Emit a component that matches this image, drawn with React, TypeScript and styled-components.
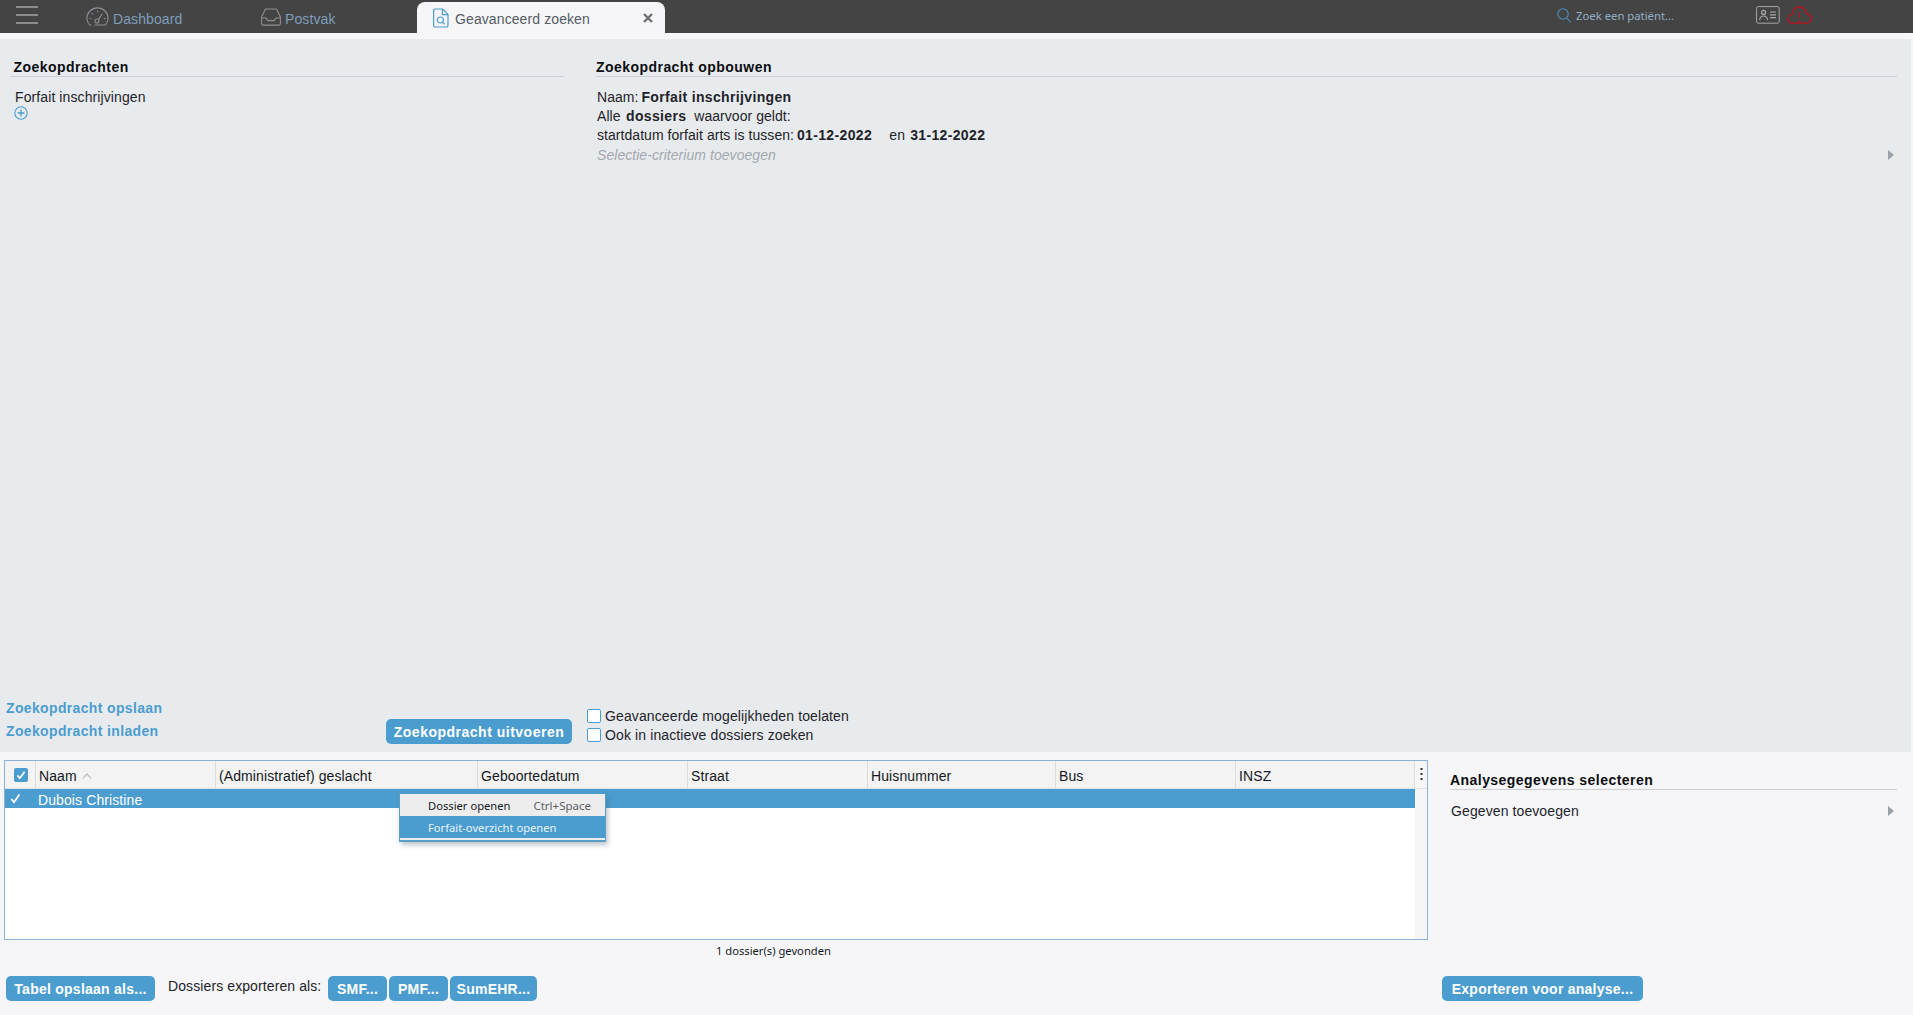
import React from "react";
import styled, { createGlobalStyle } from "styled-components";

const BLUE = "#4b9dd0";

const GlobalStyle = createGlobalStyle`
  html, body { margin: 0; padding: 0; background: #f6f6f9; }
  body { font-family: "Liberation Sans", Arial, sans-serif; font-size: 14px; letter-spacing: 0.1px; color: #1f2329; }
  * { box-sizing: border-box; }
`;

const Page = styled.div`
  width: 1913px;
  height: 1015px;
  overflow: hidden;
  display: flex;
  flex-direction: column;
  background: #f6f6f9;
`;

const TopBar = styled.header`
  height: 33px;
  flex: none;
  display: flex;
  align-items: flex-end;
  background: #444444;
`;

const Hamburger = styled.div`
  width: 22px;
  height: 18px;
  margin: 0 48px 9px 16px;
  align-self: flex-end;
  display: flex;
  flex-direction: column;
  justify-content: space-between;
  i {
    display: block;
    height: 2px;
    background: #8c8c8c;
  }
`;

const NavItem = styled.div<{ $width: number }>`
  width: ${(p) => p.$width}px;
  height: 33px;
  display: flex;
  align-items: center;
  gap: 4px;
  color: #7f9dba;
  font-size: 14px;
  span { padding-top: 4px; }
  svg { flex: none; }
`;

const ActiveTab = styled.div`
  width: 248px;
  height: 31px;
  padding: 0 12px 0 16px;
  display: flex;
  align-items: center;
  background: #f6f6f9;
  border-radius: 8px 8px 0 0;
  color: #555b63;
  font-size: 14px;
  span { margin-left: 6px; padding-top: 2px; flex: 1; }
`;

const SearchBox = styled.div`
  margin-left: auto;
  height: 33px;
  width: 199px;
  display: flex;
  align-items: center;
  gap: 5px;
  color: #93aec6;
  font-family: "Noto Sans", sans-serif;
  font-size: 11.3px;
  letter-spacing: 0;
  padding-bottom: 3px;
`;

const StatusIcons = styled.div`
  height: 33px;
  width: 157px;
  display: flex;
  align-items: center;
  gap: 7px;
  padding-bottom: 3px;
`;

const Strip = styled.div`
  height: 6px;
  flex: none;
`;

const SearchPanel = styled.section`
  height: 713px;
  flex: none;
  margin-right: 2px;
  display: flex;
  flex-direction: column;
  background: #e8ebee;
`;

const Columns = styled.div`
  flex: 1;
  min-height: 0;
  display: flex;
  padding: 20px 14px 0 10px;
  gap: 32px;
`;

const ListColumn = styled.div`
  width: 554px;
  flex: none;
`;

const BuildColumn = styled.div`
  flex: 1;
  min-width: 0;
`;

const SectionTitle = styled.h2`
  margin: 0;
  height: 18px;
  padding-left: 3.5px;
  border-bottom: 1px solid #ccd0d5;
  font-size: 14px;
  line-height: 16px;
  font-weight: 700;
  letter-spacing: 0.45px;
  color: #0b0d10;
`;

const BuildTitle = styled(SectionTitle)`
  padding-left: 0;
`;

const QueryList = styled.div`
  padding: 11px 0 0 5px;
  line-height: 19px;
`;

const AddButton = styled.div`
  height: 14px;
  margin: -1px 0 0 -1px;
  svg { display: block; }
`;

const Sentence = styled.div`
  padding: 11px 0 0 1px;
`;

const Line = styled.div`
  height: 19px;
  line-height: 19px;
  white-space: pre;
  letter-spacing: 0.05px;
  b { font-weight: 700; letter-spacing: 0.35px; }
`;

const Keyword = styled.b`
  margin-left: 1.5px;
`;

const Value = styled.b`
  margin-left: -1px;
`;

const Joiner = styled.span`
  margin: 0 2.2px 0 1.5px;
`;

const Placeholder = styled(Line)`
  margin-top: 1px;
  color: #a3a8ae;
  font-style: italic;
`;

const Arrow = styled.i`
  display: block;
  width: 0;
  height: 0;
  border-left: 6px solid #9aa1a9;
  border-top: 5px solid transparent;
  border-bottom: 5px solid transparent;
`;

const AddCriterion = styled.div`
  display: flex;
  align-items: center;
  justify-content: space-between;
  padding-right: 3px;
`;

const ActionBar = styled.div`
  height: 54px;
  flex: none;
  padding: 0 0 8px 6px;
  display: flex;
  align-items: flex-end;
`;

const SavedLinks = styled.div`
  width: 380px;
  padding-bottom: 1px;
`;

const TextLink = styled.div`
  height: 23px;
  line-height: 23px;
  color: ${BLUE};
  font-weight: 700;
  letter-spacing: 0.35px;
`;

const Button = styled.button<{ $width: number }>`
  width: ${(p) => p.$width}px;
  height: 25px;
  flex: none;
  padding: 0;
  border: 0;
  border-radius: 5px;
  background: ${BLUE};
  color: #fff;
  font-family: inherit;
  font-size: 14px;
  font-weight: 700;
  letter-spacing: 0.25px;
`;

const RunButton = styled(Button)`
  letter-spacing: 0.5px;
`;

const Options = styled.div`
  margin: 0 0 0 15px;
  letter-spacing: 0.12px;
`;

const OptionRow = styled.label`
  height: 19px;
  display: flex;
  align-items: center;
  gap: 4px;
`;

const CheckBox = styled.span`
  width: 14px;
  height: 14px;
  border: 1px solid #4b9dd0;
  border-radius: 2px;
  background: #fff;
`;

const Lower = styled.section`
  flex: 1;
  min-height: 0;
  padding-top: 8px;
  display: flex;
  flex-direction: column;
`;

const LowerTop = styled.div`
  height: 180px;
  flex: none;
  display: flex;
  padding-left: 4px;
`;

const Table = styled.div`
  position: relative;
  width: 1424px;
  flex: none;
  display: flex;
  flex-direction: column;
  background: #fff;
  border: 1px solid #8db0da;
`;

const TableGrid = "31px 180px 262px 210px 180px 188px 180px 179px 12px";

const HeaderRow = styled.div`
  height: 28px;
  flex: none;
  display: grid;
  grid-template-columns: ${TableGrid};
  background: #f3f3f3;
  border-bottom: 1px solid #e3e3e3;
`;

const HeaderCell = styled.div`
  display: flex;
  align-items: center;
  gap: 5px;
  padding: 2px 0 0 3px;
  border-right: 1px solid #dcdcdc;
  color: #14181d;
  white-space: nowrap;
`;

const CheckCell = styled(HeaderCell)`
  padding: 0 0 0 9px;
  svg { display: block; }
`;

const KebabCell = styled.div`
  display: flex;
  align-items: center;
  justify-content: center;
  background: #f6f6f6;
`;

const TableBody = styled.div`
  flex: 1;
  min-height: 0;
  display: flex;
`;

const Rows = styled.div`
  flex: 1;
`;

const Gutter = styled.div`
  width: 12px;
  flex: none;
  background: #f6f6f6;
`;

const SelectedRow = styled.div`
  height: 19px;
  display: flex;
  align-items: center;
  padding: 2px 0 0 5px;
  background: ${BLUE};
  color: #fff;
  svg { flex: none; margin: -2px 17px 0 0; }
`;

const ContextMenu = styled.div`
  position: absolute;
  left: 394px;
  top: 33px;
  width: 207px;
  height: 48px;
  padding: 0 1px;
  background: #ededed;
  border-left: 1px solid #5b9dc9;
  border-right: 1px solid #5b9dc9;
  border-bottom: 2px solid #5b9dc9;
  box-shadow: 2px 3px 5px rgba(70, 90, 110, 0.35);
  font-family: "Noto Sans", sans-serif;
  font-size: 11.2px;
  letter-spacing: 0;
`;

const MenuItem = styled.div<{ $active?: boolean }>`
  height: 22px;
  margin: 0 -1px;
  padding: 0 14px 0 28px;
  display: flex;
  align-items: center;
  justify-content: space-between;
  background: ${(p) => (p.$active ? BLUE : "#ededed")};
  color: ${(p) => (p.$active ? "#e9f3fa" : "#14181d")};
  small { font-size: 11.5px; color: #5c5f66; }
`;

const AnalysisPanel = styled.div`
  width: 447px;
  margin-left: 22px;
  padding-top: 12px;
`;

const AnalysisTitle = styled(SectionTitle)`
  padding-left: 0;
`;

const AddData = styled.div`
  margin-top: 11px;
  height: 19px;
  display: flex;
  align-items: center;
  justify-content: space-between;
  padding: 0 3px 0 1px;
`;

const ResultCount = styled.div`
  height: 21px;
  flex: none;
  padding: 3px 0 0 716px;
  font-family: "Noto Sans", sans-serif;
  font-size: 11.2px;
  letter-spacing: 0;
  line-height: 15px;
  color: #14181d;
`;

const Footer = styled.div`
  margin-top: 15px;
  height: 25px;
  flex: none;
  display: flex;
  align-items: center;
  padding: 0 270px 0 6px;
`;

const ExportLabel = styled.span`
  margin: -5px 4px 0 13px;
  width: 156px;
  flex: none;
  white-space: nowrap;
`;

const FormatButton = styled(Button)`
  margin-right: 2px;
`;

const AnalysisButton = styled(Button)`
  margin-left: auto;
`;

const GaugeIcon = () => (
  <svg width="23" height="19" viewBox="0 0 23 19" fill="none" stroke="#8b8f94" strokeWidth="1.1">
    <path d="M5 18H3.6A10.6 10.6 0 0 1 .9 11.5 10.6 10.6 0 0 1 22.1 11.5 10.6 10.6 0 0 1 19.4 18H9" strokeLinecap="round" />
    <circle cx="11" cy="14" r="2" />
    <path d="M12.4 12.6 16 7M4 11.5h.8M18.4 11.5h.8M11.5 4v.8M6.2 6.6l.5.5" strokeLinecap="round" />
  </svg>
);

const InboxIcon = () => (
  <svg width="20" height="18" viewBox="0 0 20 18" fill="none" stroke="#8b8f94" strokeWidth="1.1">
    <path d="M4.5 1h11l3.9 8v6.5a1.6 1.6 0 0 1-1.6 1.6H2.2a1.6 1.6 0 0 1-1.6-1.6V9z" strokeLinejoin="round" />
    <path d="M.8 10h4.4l1.6 2.6h6.4L14.8 10h4.4" strokeLinejoin="round" />
  </svg>
);

const DocSearchIcon = () => (
  <svg width="16" height="20" viewBox="0 0 16 20" fill="none" stroke="#4b9dd0" strokeWidth="1.2">
    <path d="M2.4 1h7.2L15 6.4v10.8a1.8 1.8 0 0 1-1.8 1.8H2.4A1.8 1.8 0 0 1 .6 17.2V2.8A1.8 1.8 0 0 1 2.4 1z" />
    <path d="M9.4 1v5.6H15" />
    <circle cx="7.4" cy="12" r="3" />
    <path d="M9.6 14.2l2.2 2.2" />
  </svg>
);

const CloseIcon = () => (
  <svg width="10" height="10" viewBox="0 0 10 10" stroke="#6b6f75" strokeWidth="2.4">
    <path d="M1 1l8 8M9 1l-8 8" />
  </svg>
);

const MagnifierIcon = () => (
  <svg width="14" height="15" viewBox="0 0 14 15" fill="none" stroke="#4b8fbd" strokeWidth="1.1">
    <circle cx="6" cy="6" r="5.2" />
    <path d="M9.8 10l3.6 4.2" />
  </svg>
);

const PatientCardIcon = () => (
  <svg width="24" height="18" viewBox="0 0 24 18" fill="none" stroke="#a9a9a9">
    <rect x=".6" y=".6" width="22.6" height="16.6" rx="1.8" />
    <circle cx="7.6" cy="6.4" r="2" strokeWidth="1.3" />
    <path d="M3.6 14c.4-3 2-4 4-4s3.6 1 4 4M14 6h6M14 8.8h6M14 11.6h6" strokeWidth="1.2" />
  </svg>
);

const CloudAlertIcon = () => (
  <svg width="25" height="18" viewBox="0 0 25 18" fill="none" stroke="#c0101f" strokeWidth="1.3">
    <path d="M5 17.2A4.2 4.2 0 0 1 1 12.8a4.2 4.2 0 0 1 4-4.2C5.6 4 8.6 1 12.4 1s6.8 3 7.3 6.7a4.8 4.8 0 0 1 4.2 4.8 4.7 4.7 0 0 1-4.7 4.7z" />
    <path d="M12.4 5.5v6.5M12.4 14v1.4" strokeWidth="1.1" />
  </svg>
);

const PlusCircleIcon = () => (
  <svg width="14" height="14" viewBox="0 0 14 14" fill="none" stroke="#4b9dd0">
    <circle cx="7" cy="7" r="6.2" strokeWidth="1.1" />
    <path d="M7 3.6v6.8M3.6 7h6.8" strokeWidth="1.3" />
  </svg>
);

const CheckedBox = () => (
  <svg width="14" height="14" viewBox="0 0 14 14">
    <rect width="14" height="14" rx="2" fill="#4b9dd0" />
    <path d="M3.4 7.4l2.4 2.8 4.8-6.4" fill="none" stroke="#fff" strokeWidth="1.7" />
  </svg>
);

const TickIcon = () => (
  <svg width="11" height="11" viewBox="0 0 11 11" fill="none" stroke="#fff" strokeWidth="1.8">
    <path d="M1.4 6l2.6 3.2L9.4 1.6" />
  </svg>
);

const SortCaret = () => (
  <svg width="10" height="6" viewBox="0 0 10 6" fill="none" stroke="#b8b8b8" strokeWidth="1.1">
    <path d="M.8 5.4L5 1l4.2 4.4" />
  </svg>
);

const KebabIcon = () => (
  <svg width="3" height="13" viewBox="0 0 3 13" fill="#333">
    <rect x=".5" width="2" height="2" />
    <rect x=".5" y="5" width="2" height="2" />
    <rect x=".5" y="10" width="2" height="2" />
  </svg>
);

const columns = ["(Administratief) geslacht", "Geboortedatum", "Straat", "Huisnummer", "Bus", "INSZ"];

export default function App() {
  return (
    <Page>
      <GlobalStyle />
      <TopBar>
        <Hamburger>
          <i />
          <i />
          <i />
        </Hamburger>
        <NavItem $width={175}>
          <GaugeIcon />
          <span>Dashboard</span>
        </NavItem>
        <NavItem $width={156}>
          <InboxIcon />
          <span>Postvak</span>
        </NavItem>
        <ActiveTab>
          <DocSearchIcon />
          <span>Geavanceerd zoeken</span>
          <CloseIcon />
        </ActiveTab>
        <SearchBox>
          <MagnifierIcon />
          Zoek een patiënt...
        </SearchBox>
        <StatusIcons>
          <PatientCardIcon />
          <CloudAlertIcon />
        </StatusIcons>
      </TopBar>
      <Strip />
      <SearchPanel>
        <Columns>
          <ListColumn>
            <SectionTitle>Zoekopdrachten</SectionTitle>
            <QueryList>
              <div>Forfait inschrijvingen</div>
              <AddButton>
                <PlusCircleIcon />
              </AddButton>
            </QueryList>
          </ListColumn>
          <BuildColumn>
            <BuildTitle>Zoekopdracht opbouwen</BuildTitle>
            <Sentence>
              <Line>
                Naam: <Value>Forfait inschrijvingen</Value>
              </Line>
              <Line>
                Alle <Keyword>dossiers</Keyword>  waarvoor geldt:
              </Line>
              <Line>
                startdatum forfait arts is tussen: <Value>01-12-2022</Value>    <Joiner>en</Joiner> <Value>31-12-2022</Value>
              </Line>
              <AddCriterion>
                <Placeholder>Selectie-criterium toevoegen</Placeholder>
                <Arrow />
              </AddCriterion>
            </Sentence>
          </BuildColumn>
        </Columns>
        <ActionBar>
          <SavedLinks>
            <TextLink>Zoekopdracht opslaan</TextLink>
            <TextLink>Zoekopdracht inladen</TextLink>
          </SavedLinks>
          <RunButton $width={186}>Zoekopdracht uitvoeren</RunButton>
          <Options>
            <OptionRow>
              <CheckBox />
              Geavanceerde mogelijkheden toelaten
            </OptionRow>
            <OptionRow>
              <CheckBox />
              Ook in inactieve dossiers zoeken
            </OptionRow>
          </Options>
        </ActionBar>
      </SearchPanel>
      <Lower>
        <LowerTop>
          <Table>
            <HeaderRow>
              <CheckCell>
                <CheckedBox />
              </CheckCell>
              <HeaderCell>
                Naam <SortCaret />
              </HeaderCell>
              {columns.map((c) => (
                <HeaderCell key={c}>{c}</HeaderCell>
              ))}
              <KebabCell>
                <KebabIcon />
              </KebabCell>
            </HeaderRow>
            <TableBody>
              <Rows>
                <SelectedRow>
                  <TickIcon />
                  Dubois Christine
                </SelectedRow>
              </Rows>
              <Gutter />
            </TableBody>
            <ContextMenu>
              <MenuItem>
                Dossier openen <small>Ctrl+Space</small>
              </MenuItem>
              <MenuItem $active>Forfait-overzicht openen</MenuItem>
            </ContextMenu>
          </Table>
          <AnalysisPanel>
            <AnalysisTitle>Analysegegevens selecteren</AnalysisTitle>
            <AddData>
              Gegeven toevoegen
              <Arrow />
            </AddData>
          </AnalysisPanel>
        </LowerTop>
        <ResultCount>1 dossier(s) gevonden</ResultCount>
        <Footer>
          <Button $width={149}>Tabel opslaan als...</Button>
          <ExportLabel>Dossiers exporteren als:</ExportLabel>
          <FormatButton $width={59}>SMF...</FormatButton>
          <FormatButton $width={59}>PMF...</FormatButton>
          <FormatButton $width={87}>SumEHR...</FormatButton>
          <AnalysisButton $width={201}>Exporteren voor analyse...</AnalysisButton>
        </Footer>
      </Lower>
    </Page>
  );
}
